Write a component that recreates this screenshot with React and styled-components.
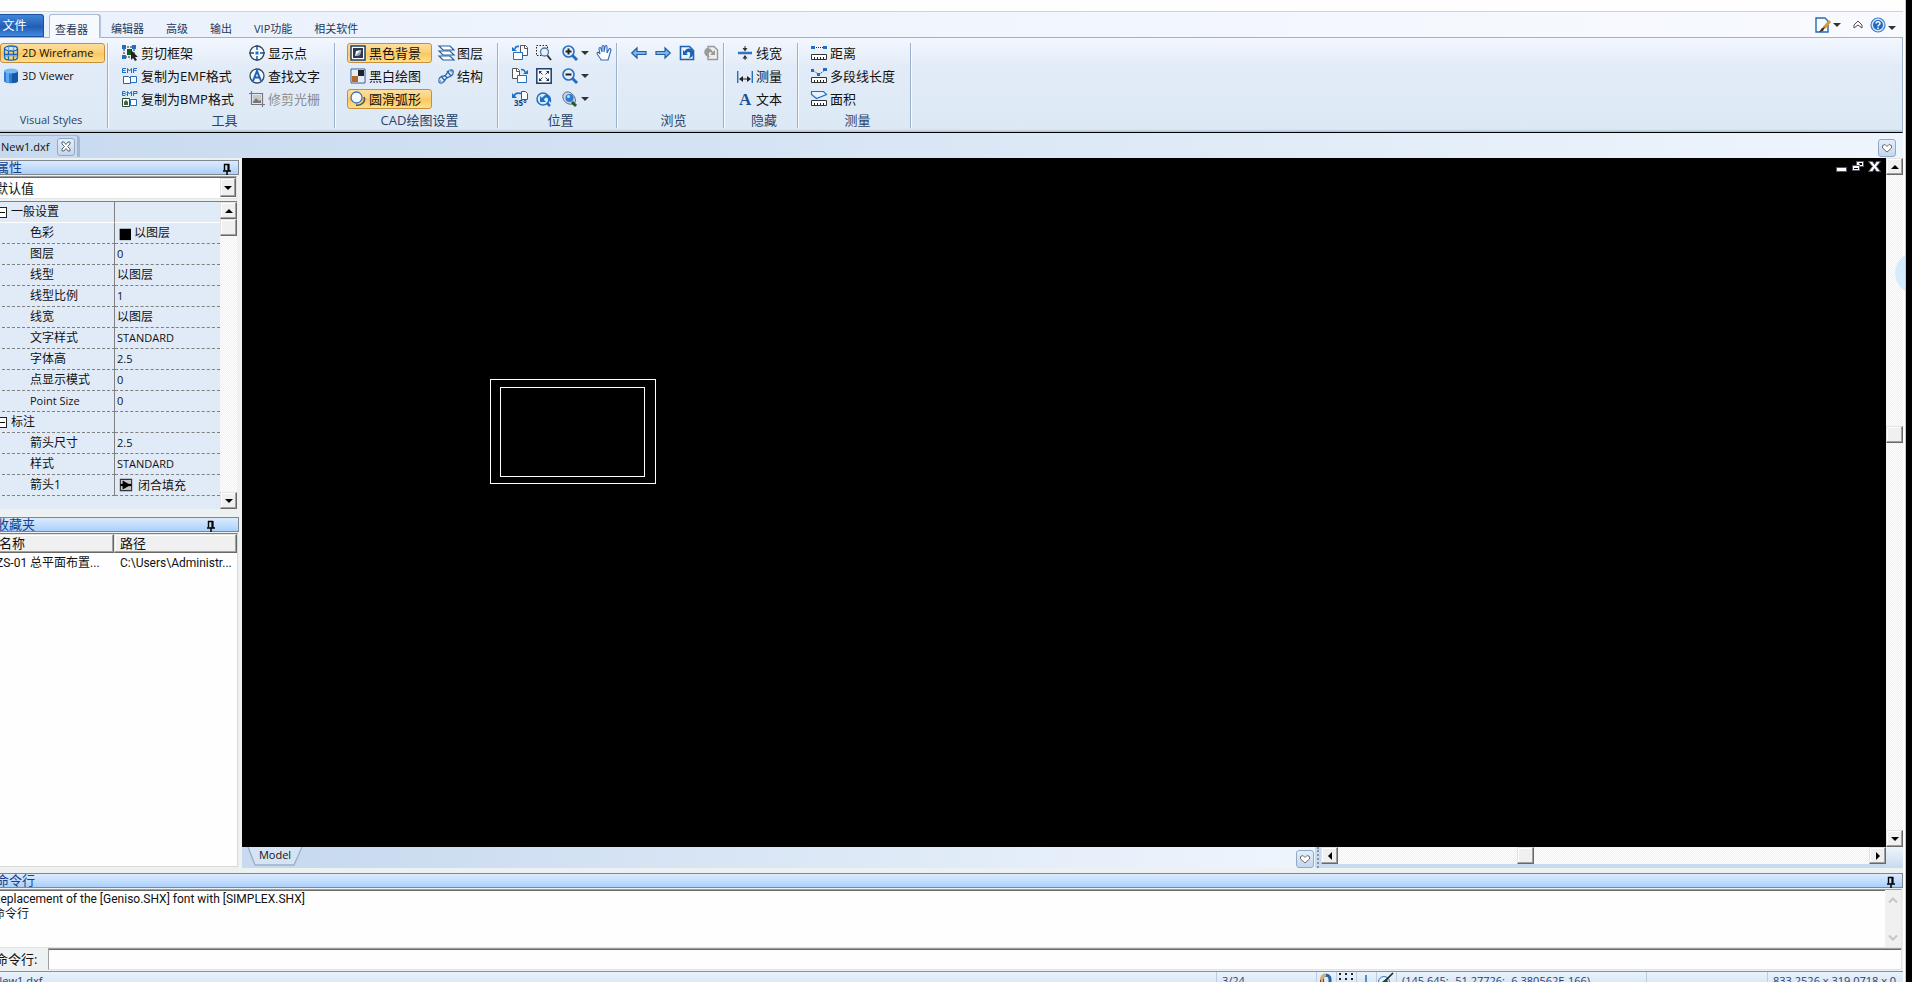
import { Fragment } from "react";
import styled, { createGlobalStyle, css } from "styled-components";

const sans = `"Open Sans", "Noto Sans CJK SC", sans-serif`;
const narrow = `Roboto, "Noto Sans CJK SC", sans-serif`;

const properties = [
    { name: "一般设置", section: true, solid: true },
    { name: "色彩", value: "以图层", icon: "swatch" },
    { name: "图层", value: "0" },
    { name: "线型", value: "以图层" },
    { name: "线型比例", value: "1" },
    { name: "线宽", value: "以图层" },
    { name: "文字样式", value: "STANDARD" },
    { name: "字体高", value: "2.5" },
    { name: "点显示模式", value: "0" },
    { name: "Point Size", value: "0" },
    { name: "标注", section: true },
    { name: "箭头尺寸", value: "2.5" },
    { name: "样式", value: "STANDARD" },
    { name: "箭头1", value: "闭合填充", icon: "closedArrow" },
];

const tabs = ["查看器", "编辑器", "高级", "输出", "VIP功能", "相关软件"];

const isLatin = (text = "") => /^[\w. ]+$/.test(text);

const dark = "#1d3f73";
const blue = "#1f6fc4";

const ruler = (
    <>
        <path d="M.5 9.500h15v5H.5z" fill="#fff" stroke="#333" />
        <path d="M3.500 12v2M6.500 12v2M9.500 12v2M12.500 12v2" stroke="#222" />
    </>
);

const lens = (
    <>
        <path d="M10 10l5 5" stroke={blue} strokeWidth="3" />
        <circle cx="6.500" cy="6.500" r="5.500" fill="#e4f1fd" stroke="#2a6fc0" strokeWidth="1.600" />
    </>
);

const icons = {
    wireframe: (
        <g fill="none" stroke="#1763b8" strokeWidth="1.300">
            <ellipse cx="8" cy="3.500" rx="6.500" ry="2.500" fill="#cfe6fa" />
            <path d="M1.500 3.500v9c0 3.500 13 3.500 13 0v-9M5.500 6v9M10.500 6v9M1.500 9.500h13" />
            <path d="M5.500 1.500v4M10.500 1.500v4M1.500 12c3-2 10-2 13 0" stroke="#6ea9e0" />
        </g>
    ),
    cylinder: (
        <>
            <path d="M1 3v10c0 3 14 3 14 0V3z" fill="#2f7bd0" />
            <path d="M9 3v12c4 0 6-1 6-2V3z" fill="#1657a8" />
            <path d="M3 4v10l3 1V4z" fill="#63a8ec" />
            <ellipse cx="8" cy="3" rx="7" ry="2.500" fill="#78baf2" />
        </>
    ),
    cropFrame: (
        <>
            <path d="M2 2h10v10H2z" fill="none" stroke="#222" strokeDasharray="2 1" />
            <path d="M0 0h4v4H0zM10 0h4v4h-4zM0 10h4v4H0z" fill={blue} />
            <path d="M5 4h5v6H5z" fill="#145a1c" />
            <path d="M9 5v10l2-2 2 3 2-1-2-3h3z" fill="#222" />
        </>
    ),
    emf: (
        <>
            <path d="M.5 5V.5H4M.5 2.500h3M.5 4.500H4M5.500 5V.5L7.500 3 9.500.5V5M11.500 5V.5H15M11.500 2.500h3" fill="none" stroke={blue} />
            <path d="M8.500 8.500h6v6h-6z" fill="#fff" stroke={blue} />
            <path d="M1.500 8.500h5l2 2v5h-7z" fill="#fff" stroke="#2962a8" />
        </>
    ),
    bmp: (
        <>
            <path d="M.5.5H3l1 1-1 1 1 1-1 1H.5zM.5 2.500H3M5.500 5V.5L7.500 3 9.500.5V5M11.500 5V.5H15v2h-3.500" fill="none" stroke={blue} />
            <path d="M8.500 8.500h6v6h-6z" fill="#fff" stroke={blue} />
            <path d="M.5 7.500h7v8h-7z" fill="#fff" stroke="#1d5426" />
            <path d="M2 14v-3l2-2 2 2v3z" fill="#555" />
        </>
    ),
    showPoint: (
        <>
            <circle cx="8" cy="8" r="7" fill="#f5faff" stroke="#37465c" strokeWidth="1.300" />
            <path d="M8 0v5M8 11v5M0 8h5M11 8h5" stroke="#1f4f8c" strokeWidth="1.400" />
            <path d="M6.500 6.500h3v3h-3z" fill={blue} />
        </>
    ),
    findText: (
        <>
            <circle cx="8" cy="8" r="7" fill="#eef6ff" stroke="#37465c" strokeWidth="1.300" />
            <path d="M4 13L8 3l4 10M5.500 9.500h5" fill="none" stroke="#1c62b8" strokeWidth="2" />
        </>
    ),
    clipRaster: (
        <g fill="none" stroke="#777">
            <path d="M2.500 0v13.500H16M0 2.500h13.500V16" strokeWidth="1.200" />
            <path d="M4 4h8v8H4z" fill="#c9c9c9" stroke="none" />
            <path d="M4 11l3-4 3 3 2-1v3H4z" fill="#777" stroke="none" />
        </g>
    ),
    blackBackground: (
        <>
            <path d="M1 1h14v14H1z" fill="#fff" stroke={dark} strokeWidth="1.500" />
            <path d="M3 3h10v10H3z" fill="#2b3a50" />
            <path d="M5 11l1-5 5-1-1 5z" fill="#fff" />
            <path d="M5 11l5-1 1-5z" fill="#9aa6b6" />
        </>
    ),
    monochrome: (
        <>
            <path d="M1 1h14v14H1z" fill="#fff" stroke="#35598b" />
            <path d="M8 2h6v6H8z" fill="#1c222c" />
            <path d="M2 8h6v6H2z" fill="#b56a2c" />
            <path d="M8 8h6v6H8z" fill="#e2edf9" />
            <path d="M2 2h6v6H2z" fill="#e8edf5" />
        </>
    ),
    smoothArc: (
        <>
            <path d="M14 6c2 5-3 9-8 8" fill="none" stroke="#41546d" strokeWidth="1.600" />
            <circle cx="6.500" cy="6.500" r="5.500" fill="#f4f9ff" stroke="#3b74b8" strokeWidth="1.300" />
        </>
    ),
    layers: (
        <g fill="#fff" stroke="#27619f" strokeWidth="1.200">
            <path d="M1 11h11l4 4H5z" />
            <path d="M1 6h11l4 4H5z" />
            <path d="M1 1h11l4 4H5z" />
        </g>
    ),
    structure: (
        <g fill="none" stroke="#2c67ae" strokeWidth="1.300">
            <path d="M1 14c-1-4 2-6 5-6s3-6 7-6c3 0 3 4 0 6S8 9 7 12s-5 4-6 2zM9 3l4 5M7 8l3 2M3 8l4 5" />
            <path d="M11 2l4 3M1 11l3 4" stroke="#7fb1e6" />
        </g>
    ),
    rotateLeft: (
        <>
            <path d="M8.500.5h5l2 2v8h-7z" fill="#fff" stroke="#555" />
            <path d="M12.500.5v3h3" fill="none" stroke="#555" />
            <path d="M1.500 7.500h9v7h-9z" fill="#fff" stroke={blue} />
            <path d="M7 1.500C5 1 3 2 3 4" fill="none" stroke={blue} strokeWidth="1.600" />
            <path d="M0 2v4h5z" fill={blue} />
        </>
    ),
    rotateRight: (
        <>
            <path d="M.5.5h5l2 2v8h-7z" fill="#fff" stroke="#555" />
            <path d="M4.500.5v3h3" fill="none" stroke="#555" />
            <path d="M5.500 7.500h9v7h-9z" fill="#fff" stroke={blue} />
            <path d="M9 1.500c3 0 4 1 4 3" fill="none" stroke={blue} strokeWidth="1.600" />
            <path d="M16 2v4h-5z" fill={blue} />
        </>
    ),
    rotateAngle: (
        <>
            <path d="M9.500.5h4l2 2v6h-6z" fill="#fff" stroke="#555" />
            <path d="M9 2.500C5 1.500 3 2.500 2 5" fill="none" stroke={blue} strokeWidth="1.600" />
            <path d="M0 2v5h5z" fill={blue} />
            <text x="2" y="15" fontSize="8" fontWeight="700" fill="#17427c">35°</text>
        </>
    ),
    zoomWindow: (
        <>
            <path d="M.5.5h11v10H.5z" fill="none" stroke="#222" strokeDasharray="1.500 1.500" />
            <path d="M11 10l4 5" stroke="#333" strokeWidth="2" />
            <circle cx="8.500" cy="7" r="4" fill="#e4f1fd" stroke="#5b7596" strokeWidth="1.300" />
        </>
    ),
    zoomExtents: (
        <>
            <path d="M.8.8h14.400v14.400H.8z" fill="#f4f8fd" stroke="#1a3f70" strokeWidth="1.500" />
            <path d="M4 4l2.500 2.500M12 4L9.500 6.500M4 12l2.500-2.500M12 12L9.500 9.500" stroke="#333" />
            <path d="M3 3h3L3 6zM13 3v3l-3-3zM3 13v-3l3 3zM13 13h-3l3-3z" fill="#333" />
        </>
    ),
    zoomPrevious: (
        <>
            <circle cx="7" cy="8" r="6" fill="#d9ebfc" stroke={blue} strokeWidth="1.500" />
            <path d="M4 5v6h6L8 9c1-3 3-3 4-1l3 4c1-6-2-9-5-8-2 0-3 2-4 3z" fill={blue} />
            <path d="M11 12l3 3" stroke={blue} strokeWidth="2.500" />
        </>
    ),
    zoomIn: (
        <>
            {lens}
            <path d="M6.500 3.500v6M3.500 6.500h6" stroke="#222" strokeWidth="2" />
        </>
    ),
    zoomOut: (
        <>
            {lens}
            <path d="M3.500 6.500h6" stroke="#222" strokeWidth="2" />
        </>
    ),
    zoomObject: (
        <>
            <path d="M1 4c2-5 9-4 12 3 2 5-2 7-6 6S0 8 1 4z" fill="#c9d5e2" stroke="#5d6d80" />
            <circle cx="7.500" cy="7" r="4" fill="#2b7cd3" />
            <circle cx="6.500" cy="5.500" r="1.500" fill="#bfe0fb" />
            <path d="M10 11l4 4" stroke="#215b27" strokeWidth="3" />
        </>
    ),
    hand: (
        <path
            d="M5 15c-1-3-4-5-4-7 0-1 2-1 3 1L3 4c0-2 2-2 2 0l1 3V2c0-2 2-2 2 0v5l1-5c0-2 2-2 2 0v6l2-4c1-1 2 0 2 1-1 3-2 7-3 10z"
            fill="#fff"
            stroke="#2a6cbd"
            strokeWidth="1.100"
        />
    ),
    back: <path d="M.7 8L6 3v3.500h9v3H6V13z" fill="#7cb6ee" stroke="#245ea8" strokeWidth="1.200" />,
    forward: <path d="M15.300 8L10 3v3.500H1v3h9V13z" fill="#7cb6ee" stroke="#245ea8" strokeWidth="1.200" />,
    undoView: (
        <>
            <path d="M1.500 1.500h9l4 4v9h-13z" fill="#e8f3fe" stroke="#1d62b5" strokeWidth="1.600" />
            <path d="M4 5v5h5L7.500 8.500C9 6 12 7 11 10c0 2-1 3-2 3 6 0 7-7 3-9-3-1-5 0-6.500 2.500z" fill="#1d62b5" />
        </>
    ),
    redoView: (
        <>
            <path d="M5 1.500h6l3.500 3.500v9.500H5z" fill="#eee" stroke="#999" strokeWidth="1.400" />
            <path d="M12 5v5H7l2-2C6 6 4 9 7 12 0 12 0 4 4 3c3 0 4 1 6 4z" fill="#9a9a9a" />
        </>
    ),
    lineWidth: (
        <>
            <path d="M1 8h14" stroke="#2c74c4" strokeWidth="2.500" />
            <path d="M8 1v4M8 11v4" stroke="#333" />
            <path d="M5.500 3h5L8 6.500zM5.500 13.500h5L8 10z" fill="#333" />
        </>
    ),
    dimension: (
        <>
            <path d="M.7 3v12M15.300 3v12" stroke={blue} strokeWidth="1.400" />
            <path d="M3 11h10" stroke="#222" />
            <path d="M2 11l4-3v6zM14 11l-4-3v6z" fill="#222" />
        </>
    ),
    textA: (
        <text x="2" y="14" fontFamily="Liberation Serif" fontSize="17" fontWeight="700" fill="#1a5099">A</text>
    ),
    distance: (
        <>
            <path d="M3 2.500h10" stroke="#333" strokeDasharray="1 1" />
            <path d="M0 1h4v3H0zM12 1h4v3h-4z" fill={blue} />
            {ruler}
        </>
    ),
    polyline: (
        <>
            <path d="M2 2.500l6 4 6-4.500" fill="none" stroke="#333" strokeDasharray="1 1" />
            <path d="M0 1h3v3H0zM6 5h3v3H6zM12 0h4v3h-4z" fill={blue} />
            {ruler}
        </>
    ),
    area: (
        <>
            <path d="M.5.5h12l3 3-10 4-5-4z" fill="#e4f2ff" stroke={blue} strokeWidth="1.200" />
            {ruler}
        </>
    ),
    theme: (
        <>
            <path d="M1 1h9l3 3v11H1z" fill="#f6fbff" stroke="#2468b8" strokeWidth="1.400" />
            <path d="M15 4l-6 7" stroke="#d79b35" strokeWidth="3" />
            <path d="M10 10l-2 4-4 1 3-4z" fill="#3b2d22" />
        </>
    ),
    help: (
        <>
            <circle cx="8" cy="8" r="7" fill="#d6e9fb" stroke="#3b7fc9" strokeWidth="1.200" />
            <circle cx="8" cy="8" r="5" fill="#2168be" />
            <path d="M6 6.500c0-2.500 4-2.500 4 0 0 1.500-2 1.500-2 3M8 10.500V12" fill="none" stroke="#fff" strokeWidth="1.500" />
        </>
    ),
    collapse: <path d="M4 11V8l4-4 4 4v3L8 8z" fill="#fff" stroke="#4f4a5c" strokeLinejoin="round" />,
    heart: <path d="M8 12L3.500 8V5.500L6 4.500l2 2 2-2 2.500 1V8z" fill="#fff" stroke="#716a66" strokeLinejoin="round" />,
    close: <path d="M4 3h2l2 2.500L10 3h2v2L9.500 7.500 12 10v2h-2L8 9.500 6 12H4v-2l2.500-2.500L4 5z" fill="#fff" stroke="#5c6470" />,
    pin: (
        <>
            <path d="M4 10h8M8 10v4" stroke="#000" strokeWidth="1.500" />
            <path d="M5.500 9.500v-6h4v6" fill="none" stroke="#000" strokeWidth="1.400" />
            <path d="M9.500 3v7" stroke="#000" strokeWidth="2" />
        </>
    ),
    closedArrow: (
        <>
            <path d="M3 3h10v10H3z" fill="#c4c4c4" stroke="#333" />
            <path d="M5 4l7 4-7 4z" fill="#000" />
            <path d="M3 8h10" stroke="#000" strokeWidth="2" />
        </>
    ),
    swatch: <path d="M3 2h13v13H3z" fill="#000" />,
    magnet: (
        <>
            <path d="M4 16V7c0-5 8-5 8 0v9" fill="none" stroke="#2764a4" strokeWidth="3" />
            <path d="M4 16V7c0-3 2-4 4-4" fill="none" stroke="#d9ad6d" strokeWidth="3" />
            <path d="M2 8v5h1V8zM5 7v4h1V7z" fill="#a02a20" />
        </>
    ),
    gridDots: <path d="M1 2h14M1 7h14M1 12h14" stroke="#222" strokeWidth="2" strokeDasharray="2 4" />,
    ortho: <path d="M8 3v12" stroke={blue} strokeWidth="1.500" />,
    snap: (
        <>
            <circle cx="6" cy="10" r="5.500" fill="#e4f2ff" stroke="#3f78b7" />
            <path d="M15 1L5 11M5 11l5 1" stroke="#222" strokeWidth="1.600" />
            <path d="M4 10l5-4 1 5z" fill="#1c4a26" />
        </>
    ),
};

function Icon({ name, size = 16 }) {
    return (
        <svg width={size} height={size} viewBox="0 0 16 16" aria-hidden="true">
            {icons[name]}
        </svg>
    );
}

function Tool({ icon, label, active, disabled, drop, compact }) {
    return (
        <ToolButton
            type="button"
            aria-label={label ? undefined : icon}
            $active={active}
            $compact={compact}
            disabled={disabled}
        >
            <Icon name={icon} />
            {label}
            {drop && <Caret />}
        </ToolButton>
    );
}

function ScrollBar({ horizontal, before, after }) {
    const [start, end] = horizontal ? ["left", "right"] : ["up", "down"];
    return (
        <Scroll $horizontal={horizontal}>
            <ScrollButton type="button" aria-label={start}>
                <Arrow $dir={start} />
            </ScrollButton>
            <Gap $grow={before} />
            <Thumb />
            <Gap $grow={after} />
            <ScrollButton type="button" aria-label={end}>
                <Arrow $dir={end} />
            </ScrollButton>
        </Scroll>
    );
}

function Properties() {
    return (
        <>
            <PanelHeader>
                属性
                <PinButton type="button" aria-label="pin">
                    <Icon name="pin" />
                </PinButton>
            </PanelHeader>
            <Combo>
                <select aria-label="属性">
                    <option>默认值</option>
                </select>
                <ComboArrow>
                    <Arrow $dir="down" />
                </ComboArrow>
            </Combo>
            <PropertyArea>
                <PropertyTable>
                    <tbody>
                        {properties.map(({ name, value, icon, section, solid }) => (
                            <tr key={name}>
                                <NameCell scope="row" $section={section} $solid={solid} $small={isLatin(name)}>
                                    {section && <Fold type="button" aria-label={"fold " + name} />}
                                    {name}
                                </NameCell>
                                <ValueCell $solid={solid} $small={isLatin(value)}>
                                    {icon && <Icon name={icon} size={icon === "swatch" ? 14 : 18} />}
                                    {value}
                                </ValueCell>
                            </tr>
                        ))}
                    </tbody>
                </PropertyTable>
                <ScrollBar before={0} after={1} />
            </PropertyArea>
        </>
    );
}

function Favorites() {
    return (
        <>
            <PanelHeader $inset>
                收藏夹
                <PinButton type="button" aria-label="pin">
                    <Icon name="pin" />
                </PinButton>
            </PanelHeader>
            <FavoriteArea>
                <FavoriteTable>
                    <thead>
                        <tr>
                            <th>名称</th>
                            <th>路径</th>
                        </tr>
                    </thead>
                    <tbody>
                        <tr>
                            <td>ZS-01 总平面布置...</td>
                            <td>C:\Users\Administr...</td>
                        </tr>
                    </tbody>
                </FavoriteTable>
            </FavoriteArea>
        </>
    );
}

function Ribbon() {
    return (
        <RibbonBar>
            <Group $width={116}>
                <Columns $start={8}>
                    <Column $wide>
                        <Tool icon="wireframe" label="2D Wireframe" active />
                        <Tool icon="cylinder" label="3D Viewer" />
                    </Column>
                </Columns>
                <GroupTitle $small>Visual Styles</GroupTitle>
            </Group>
            <Group $width={227}>
                <Columns $start={11} $gap={12}>
                    <Column $width={115}>
                        <Tool icon="cropFrame" label="剪切框架" />
                        <Tool icon="emf" label="复制为EMF格式" />
                        <Tool icon="bmp" label="复制为BMP格式" />
                    </Column>
                    <Column>
                        <Tool icon="showPoint" label="显示点" />
                        <Tool icon="findText" label="查找文字" />
                        <Tool icon="clipRaster" label="修剪光栅" disabled />
                    </Column>
                </Columns>
                <GroupTitle>工具</GroupTitle>
            </Group>
            <Group $width={163}>
                <Columns $start={12} $gap={4}>
                    <Column $width={84}>
                        <Tool icon="blackBackground" label="黑色背景" active />
                        <Tool icon="monochrome" label="黑白绘图" />
                        <Tool icon="smoothArc" label="圆滑弧形" active />
                    </Column>
                    <Column>
                        <Tool icon="layers" label="图层" />
                        <Tool icon="structure" label="结构" />
                    </Column>
                </Columns>
                <GroupTitle>CAD绘图设置</GroupTitle>
            </Group>
            <Group $width={119}>
                <Columns $start={10}>
                    <Column>
                        <Tool icon="rotateLeft" compact />
                        <Tool icon="rotateRight" compact />
                        <Tool icon="rotateAngle" compact />
                    </Column>
                    <Column $width={27}>
                        <Tool icon="zoomWindow" compact />
                        <Tool icon="zoomExtents" compact />
                        <Tool icon="zoomPrevious" compact />
                    </Column>
                    <Column>
                        <Tool icon="zoomIn" drop />
                        <Tool icon="zoomOut" drop />
                        <Tool icon="zoomObject" drop />
                    </Column>
                    <Column>
                        <Tool icon="hand" compact />
                    </Column>
                </Columns>
                <GroupTitle>位置</GroupTitle>
            </Group>
            <Group $width={107}>
                <Columns $start={10}>
                    <Tool icon="back" compact />
                    <Tool icon="forward" compact />
                    <Tool icon="undoView" compact />
                    <Tool icon="redoView" compact />
                </Columns>
                <GroupTitle>浏览</GroupTitle>
            </Group>
            <Group $width={74}>
                <Columns $start={10}>
                    <Column>
                        <Tool icon="lineWidth" label="线宽" />
                        <Tool icon="dimension" label="测量" />
                        <Tool icon="textA" label="文本" />
                    </Column>
                </Columns>
                <GroupTitle>隐藏</GroupTitle>
            </Group>
            <Group $width={113}>
                <Columns $start={10}>
                    <Column>
                        <Tool icon="distance" label="距离" />
                        <Tool icon="polyline" label="多段线长度" />
                        <Tool icon="area" label="面积" />
                    </Column>
                </Columns>
                <GroupTitle>测量</GroupTitle>
            </Group>
        </RibbonBar>
    );
}

export default function App() {
    return (
        <Fragment>
            <GlobalStyle />
            <Screen>
                <Frame>
                    <Window>
                        <TabBar>
                            <FileButton type="button">文件</FileButton>
                            {tabs.map((tab, index) => (
                                <Tab key={tab} type="button" $active={index === 0}>
                                    {tab}
                                </Tab>
                            ))}
                            <QuickTools>
                                <FlatButton type="button" aria-label="theme" $spaced>
                                    <Icon name="theme" />
                                    <Caret />
                                </FlatButton>
                                <FlatButton type="button" aria-label="collapse">
                                    <Icon name="collapse" />
                                </FlatButton>
                                <FlatButton type="button" aria-label="help">
                                    <Icon name="help" />
                                    <Caret $low />
                                </FlatButton>
                            </QuickTools>
                        </TabBar>
                        <Ribbon />
                        <DocumentBar>
                            <DocumentTab>
                                New1.dxf
                                <RoundButton type="button" aria-label="close">
                                    <Icon name="close" />
                                </RoundButton>
                            </DocumentTab>
                            <RoundButton type="button" aria-label="documents">
                                <Icon name="heart" />
                            </RoundButton>
                        </DocumentBar>
                        <Body>
                            <SidePanel>
                                <Properties />
                                <Favorites />
                            </SidePanel>
                            <Workspace>
                                <CanvasRow>
                                    <Canvas>
                                        <Drawing aria-label="drawing">
                                            <rect x="248.500" y="221.500" width="165" height="104" />
                                            <rect x="258.500" y="229.500" width="144" height="89" />
                                        </Drawing>
                                        <ViewControls width="46" height="14" viewBox="0 0 46 14">
                                            <path d="M1.500 8.500h10v4h-10z" />
                                            <path d="M21.500 2.500h7v5h-7z" />
                                            <path d="M17.500 6.500h7v5h-7z" />
                                            <path d="M19 9h4v1h-4zM24 4h3v2h-2z" fill="#000" stroke="none" />
                                            <path d="M33.500 2.500h4l2 3 2-3h4l-4 5 4 5h-4l-2-3-2 3h-4l4-5z" />
                                        </ViewControls>
                                    </Canvas>
                                    <ScrollBar before={251} after={388} />
                                </CanvasRow>
                                <ModelBar>
                                    <ModelTab type="button">
                                        <svg width="56" height="20" viewBox="0 0 56 20" aria-hidden="true">
                                            <path d="M1 0l7 18h39l8-18" />
                                        </svg>
                                        <span>Model</span>
                                    </ModelTab>
                                    <ModelFill>
                                        <RoundButton type="button" aria-label="layouts">
                                            <Icon name="heart" />
                                        </RoundButton>
                                    </ModelFill>
                                    <Splitter />
                                    <HorizontalArea>
                                        <ScrollBar horizontal before={179} after={335} />
                                    </HorizontalArea>
                                    <Corner />
                                </ModelBar>
                            </Workspace>
                        </Body>
                        <Command>
                            <PanelHeader>
                                命令行
                                <PinButton type="button" aria-label="pin">
                                    <Icon name="pin" />
                                </PinButton>
                            </PanelHeader>
                            <Log>
                                <div>
                                    <p>Replacement of the [Geniso.SHX] font with [SIMPLEX.SHX]</p>
                                    <p>命令行</p>
                                </div>
                                <LogScroll width="16" viewBox="0 0 16 56" aria-hidden="true">
                                    <path d="M4 12l4-4 4 4M4 45l4 4 4-4" />
                                </LogScroll>
                            </Log>
                            <Prompt>
                                <label htmlFor="command">命令行:</label>
                                <input id="command" type="text" />
                            </Prompt>
                        </Command>
                        <Status>
                            <StatusCell $grow>New1.dxf</StatusCell>
                            <StatusCell $width={100}>3/24</StatusCell>
                            <StatusIcon>
                                <Icon name="magnet" />
                            </StatusIcon>
                            <StatusIcon>
                                <Icon name="gridDots" />
                            </StatusIcon>
                            <StatusIcon>
                                <Icon name="ortho" />
                            </StatusIcon>
                            <StatusIcon>
                                <Icon name="snap" />
                            </StatusIcon>
                            <StatusCell $width={250}>(145.645; -51.27726; -6.380562E-166)</StatusCell>
                            <StatusCell $width={121} />
                            <StatusCell $width={136}>833.2526 x 319.0718 x 0</StatusCell>
                        </Status>
                    </Window>
                    <EdgeHandle />
                </Frame>
            </Screen>
        </Fragment>
    );
}

const GlobalStyle = createGlobalStyle`
    *, *::before, *::after {
        box-sizing: border-box;
    }
    body {
        margin: 0;
        overflow: hidden;
        font-family: ${sans};
        font-size: 12px;
        line-height: 16px;
        color: #111;
    }
    button, input, select {
        font: inherit;
        color: inherit;
        padding: 0;
        margin: 0;
        border: 0;
        background: none;
    }
    svg {
        display: block;
        flex: none;
        overflow: visible;
    }
`;

const raised = css`
    background: #eff0ef;
    border: 1px solid;
    border-color: #e3e3e3 #696969 #696969 #e3e3e3;
    box-shadow: inset -1px -1px #a0a0a0, inset 1px 1px #fff;
`;

const sunken = css`
    border: 1px solid;
    border-color: #a0a0a0 #e3e3e3 #e3e3e3 #a0a0a0;
    box-shadow: inset 0 1px #696969;
`;

const Screen = styled.div`
    height: 100vh;
    padding-right: 6px;
    background: #000;
`;

const Frame = styled.div`
    position: relative;
    height: 100%;
    overflow: hidden;
    background: #fefefe;
    border-right: 1px solid #c8c8c8;
`;

/* the window hangs a little over the left and bottom edges of the desktop */
const Window = styled.main`
    display: flex;
    flex-direction: column;
    height: calc(100vh + 11px);
    margin: 0 2px 0 -8px;
    padding-top: 11px;
`;

const TabBar = styled.nav`
    display: flex;
    flex: none;
    align-items: flex-end;
    height: 26px;
    padding-left: 8px;
    border-top: 1px solid #d0d2d4;
    background: linear-gradient(90deg, #eaf1fc, #f8fafe);
    color: #1e395b;
    font-size: 11px;
`;

const FileButton = styled.button`
    width: 44px;
    height: 23px;
    padding-right: 14px;
    border: 1px solid #1c4f9c;
    border-left: 0;
    border-radius: 0 3px 0 0;
    background: linear-gradient(#3f86d8, #2763b8 50%, #1f57ae 51%, #3f8ae0);
    color: #fff;
    font-size: 12px;
    white-space: nowrap;
`;

const Tab = styled.button`
    height: 23px;
    padding: 6px 11px 0;
    white-space: nowrap;
    ${({ $active }) =>
        $active &&
        css`
            height: 24px;
            margin: 0 0 -1px 5px;
            padding: 6px 11px 0 5px;
            border: 1px solid #a9bdd6;
            border-bottom: 0;
            border-radius: 3px 3px 0 0;
            background: #f6f9fe;
            box-shadow: 1px 0 #b4c4d9;
            z-index: 1;
        `}
`;

const QuickTools = styled.div`
    display: flex;
    align-items: center;
    gap: 4px;
    height: 100%;
    margin-left: auto;
    padding-right: 7px;
`;

const FlatButton = styled.button`
    display: flex;
    align-items: center;
    gap: 2px;
    margin-right: ${({ $spaced }) => ($spaced ? "5px" : 0)};
`;

const Caret = styled.i`
    border: 4px solid transparent;
    border-top-color: #333;
    border-bottom: 0;
    margin-top: ${({ $low }) => ($low ? "6px" : 0)};
`;

const RibbonBar = styled.section`
    display: flex;
    flex: none;
    height: 96px;
    border-top: 1px solid #a0b2cb;
    border-right: 1px solid #a0b2cb;
    border-bottom: 1px solid #000;
    background: linear-gradient(#f3f7fe, #e2ecf8 30%, #dce9f5 97%, #a9bfd4);
`;

const Group = styled.div`
    display: flex;
    flex-direction: column;
    justify-content: space-between;
    width: ${({ $width }) => $width}px;
    height: 85px;
    margin-top: 5px;
    border-right: 1px solid #9db0cb;
    box-shadow: 1px 0 #f7fafe;
`;

const Columns = styled.div`
    display: flex;
    align-items: flex-start;
    gap: ${({ $gap = 0 }) => $gap}px;
    padding-left: ${({ $start }) => $start}px;
`;

const Column = styled.div`
    display: flex;
    flex-direction: column;
    align-items: flex-start;
    gap: 3px;
    width: ${({ $wide, $width }) => ($wide ? "105px" : $width ? $width + "px" : "auto")};
    font-size: ${({ $wide }) => ($wide ? 11 : 13)}px;
    ${({ $wide }) =>
        $wide &&
        css`
            button {
                width: 100%;
            }
        `}
`;

const ToolButton = styled.button`
    display: flex;
    align-items: center;
    gap: 3px;
    height: 20px;
    padding: 0 ${({ $compact }) => ($compact ? 4 : 3)}px;
    border: 1px solid transparent;
    border-width: 1px 0;
    border-radius: 3px;
    color: #111;
    white-space: nowrap;
    ${({ $active }) =>
        $active &&
        css`
            padding-right: 10px;
            border: 1px solid #c98f38;
            padding-left: 2px;
            background: linear-gradient(#fcdfa0, #fdd077 45%, #fdc55c 50%, #fee08e);
        `}
    &:disabled {
        color: #8d8d8d;
    }
`;

const GroupTitle = styled.h2`
    margin: 0;
    padding-left: ${({ $small }) => ($small ? 3 : 7)}px;
    color: #2b4468;
    font-size: ${({ $small }) => ($small ? 11 : 13)}px;
    font-weight: 400;
    line-height: 16px;
    text-align: center;
`;

const DocumentBar = styled.div`
    display: flex;
    flex: none;
    justify-content: space-between;
    align-items: flex-end;
    height: 25px;
    padding: 0 7px 1px 0;
    background: linear-gradient(90deg, #c8daf0, #d5e4f4 40%, #eff5fd);
`;

const DocumentTab = styled.div`
    display: flex;
    align-items: center;
    justify-content: space-between;
    width: 88px;
    height: 22px;
    padding: 0 2px 0 9px;
    border-right: 3px solid #a6b8cf;
    border-top: 1px solid #a6b8cf;
    border-radius: 0 4px 0 0;
    font-size: 11px;
`;

const RoundButton = styled.button`
    display: flex;
    align-items: center;
    justify-content: center;
    width: 18px;
    height: 18px;
    border: 1px solid #92a9c4;
    border-radius: 3px;
    background: linear-gradient(#e3eefa, #c3d7ef);
`;

const Body = styled.div`
    display: flex;
    flex: 1;
    min-height: 0;
`;

const SidePanel = styled.aside`
    display: flex;
    flex: none;
    flex-direction: column;
    width: 250px;
    padding: 2px 3px 1px 0;
    background: #eef1f1;
`;

const PanelHeader = styled.header`
    display: flex;
    flex: none;
    align-items: center;
    justify-content: space-between;
    height: 15px;
    margin-top: ${({ $inset }) => ($inset ? "8px" : 0)};
    padding: 0 ${({ $inset }) => ($inset ? 19 : 3)}px 0 3px;
    border: 1px solid #7f8791;
    background: linear-gradient(#dcebfd, #abd0fb);
    color: #15428b;
    font-size: 13px;
    line-height: 13px;
`;

const PinButton = styled.button`
    height: 13px;
`;

const Combo = styled.div`
    display: flex;
    flex: none;
    align-items: center;
    height: 23px;
    margin: 1px 2px 2px 0;
    background: #fff;
    ${sunken}
    select {
        flex: 1;
        height: 20px;
        padding-left: 2px;
        appearance: none;
        font-size: 13px;
    }
`;

const ComboArrow = styled.span`
    display: flex;
    align-items: center;
    justify-content: center;
    width: 16px;
    height: 19px;
    pointer-events: none;
    ${raised}
`;

const PropertyArea = styled.div`
    display: flex;
    flex: none;
    height: 308px;
    margin-right: 2px;
    border-top: 1px solid #808080;
    background: #e1ebf8;
`;

const PropertyTable = styled.table`
    flex: 1;
    align-self: flex-start;
    table-layout: fixed;
    border-collapse: separate;
    border-spacing: 0;
`;

const cell = css`
    height: 21px;
    border-bottom: 1px ${({ $solid }) => ($solid ? "solid #fff" : "dashed #808080")};
    font-size: ${({ $small }) => ($small ? 11 : 12)}px;
    font-weight: 400;
    line-height: 16px;
    text-align: left;
    white-space: nowrap;
`;

const NameCell = styled.th`
    width: 123px;
    padding: 0 0 0 ${({ $section }) => ($section ? 2 : 38)}px;
    border-right: 1px solid #808080;
    ${cell}
`;

const ValueCell = styled.td`
    width: 105px;
    padding: 0 0 0 2px;
    ${cell}
    svg {
        display: inline-block;
        margin-right: 3px;
        vertical-align: -4px;
    }
`;

const Fold = styled.button`
    display: inline-block;
    width: 11px;
    height: 11px;
    margin: 0 4px 0 2px;
    border: 1px solid #222;
    background: linear-gradient(#111, #111) center / 6px 1px no-repeat #fff;
    vertical-align: -1px;
`;

const Scroll = styled.div`
    display: flex;
    flex: none;
    flex-direction: ${({ $horizontal }) => ($horizontal ? "row" : "column")};
    ${({ $horizontal }) => ($horizontal ? "height" : "width")}: 17px;
    background: repeating-conic-gradient(#f0f0f0 0 25%, #fff 0 50%) 0 0 / 2px 2px;
`;

const ScrollButton = styled.button`
    display: flex;
    flex: none;
    align-items: center;
    justify-content: center;
    width: 17px;
    height: 17px;
    ${raised}
`;

const Arrow = styled.i`
    border: 4px solid transparent;
    ${({ $dir }) =>
        ({
            up: "border-bottom-color: #000; border-top: 0;",
            down: "border-top-color: #000; border-bottom: 0;",
            left: "border-right-color: #000; border-left: 0;",
            right: "border-left-color: #000; border-right: 0;",
        }[$dir])}
`;

const Gap = styled.span`
    flex: ${({ $grow }) => $grow} 1 0;
`;

const Thumb = styled.span`
    flex: none;
    width: 17px;
    height: 17px;
    ${raised}
`;

const FavoriteArea = styled.div`
    flex: 1;
    margin: 1px 1px 0 0;
    background: #fefefe;
    border: 1px solid #d9d9d9;
    border-top-color: #808080;
`;

const FavoriteTable = styled.table`
    width: 100%;
    table-layout: fixed;
    border-collapse: separate;
    border-spacing: 0;
    font-family: ${narrow};
    th {
        height: 19px;
        padding: 0 0 0 5px;
        ${raised}
        font-size: 13px;
        font-weight: 400;
        line-height: 14px;
        text-align: left;
    }
    th:first-child {
        width: 121px;
    }
    td {
        height: 20px;
        padding: 0 0 0 6px;
        white-space: nowrap;
    }
    td:first-child {
        padding-left: 3px;
    }
`;

const Workspace = styled.section`
    display: flex;
    flex: 1;
    flex-direction: column;
    min-width: 0;
`;

const CanvasRow = styled.div`
    display: flex;
    flex: 1;
    min-height: 0;
`;

const Canvas = styled.div`
    position: relative;
    flex: 1;
    background: #000;
`;

const Drawing = styled.svg`
    position: absolute;
    inset: 0;
    width: 100%;
    height: 100%;
    fill: none;
    stroke: #fff;
`;

const ViewControls = styled.svg`
    position: absolute;
    top: 1px;
    right: 5px;
    fill: #fff;
    stroke: #5a5468;
`;

const ModelBar = styled.div`
    display: flex;
    flex: none;
    height: 21px;
    background: #c8daef;
`;

const ModelTab = styled.button`
    display: grid;
    justify-items: center;
    margin-left: 5px;
    font-size: 11px;
    svg,
    span {
        grid-area: 1 / 1;
    }
    path {
        fill: #d5e3f4;
        stroke: #9db0c8;
        stroke-width: 1.4;
    }
`;

const ModelFill = styled.div`
    display: flex;
    flex: 1012 1 0;
    align-items: flex-end;
    justify-content: flex-end;
    padding-right: 1px;
    background: linear-gradient(90deg, #c8daef, #eff5fd);
`;

const Splitter = styled.div`
    width: 4px;
    margin-right: 2px;
    border-right: 2px dotted #8e949c;
`;

const HorizontalArea = styled.div`
    flex: 565 1 0;
`;

const Corner = styled.div`
    width: 17px;
    background: linear-gradient(#eff5fc, #c8daef);
`;

const Command = styled.section`
    flex: none;
    padding: 5px 0 1px;
    background: #eef1f1;
`;

const Log = styled.div`
    display: flex;
    height: 59px;
    margin: 1px 1px 0 0;
    background: #fefefe;
    font-family: ${narrow};
    ${sunken}
    > div {
        flex: 1;
        padding-top: 2px;
    }
    p {
        margin: 0;
        line-height: 15px;
    }
`;

const LogScroll = styled.svg`
    background: #f0f0f0;
    fill: none;
    stroke: #c6c6c6;
    stroke-width: 2;
`;

const Prompt = styled.div`
    display: flex;
    align-items: center;
    height: 22px;
    margin-right: 1px;
    padding-left: 3px;
    font-size: 13px;
    label {
        width: 53px;
    }
    input {
        flex: 1;
        height: 22px;
        padding: 0 4px;
        background: #fefefe;
        ${sunken}
    }
`;

const Status = styled.footer`
    display: flex;
    flex: none;
    height: 22px;
    border-top: 1px solid #7d93ad;
    background: linear-gradient(#eaf3fb, #c9dcf1);
    color: #1c417c;
    font-size: 11px;
`;

const StatusCell = styled.span`
    flex: ${({ $grow, $width }) => ($grow ? "1" : "0 0 " + $width + "px")};
    padding: 1px 0 0 ${({ $grow }) => ($grow ? 2 : 5)}px;
    border-left: ${({ $grow }) => ($grow ? 0 : 1)}px solid #b9cee6;
    white-space: nowrap;
`;

const StatusIcon = styled.span`
    flex: 0 0 20px;
    padding-left: 1px;
    border-left: 1px solid #b9cee6;
`;

const EdgeHandle = styled.div`
    position: absolute;
    top: 252px;
    right: -32px;
    width: 42px;
    height: 42px;
    border-radius: 50%;
    background: #d5ecfe;
`;
